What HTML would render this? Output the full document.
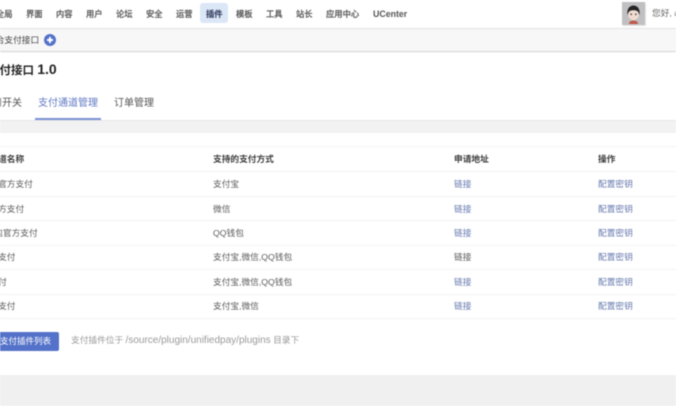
<!DOCTYPE html>
<html lang="zh-CN"><head><meta charset="utf-8"><title>支付接口</title>
<style>
html,body{margin:0;padding:0;width:676px;height:406px;overflow:hidden;background:#fff}
body{position:relative;font-family:"Liberation Sans","Noto Sans CJK SC",sans-serif;color:#555}
#w{position:absolute;left:0;top:0;width:676px;height:406px;overflow:hidden;filter:blur(.4px)}
#w div{position:absolute;white-space:nowrap}
.n{top:8px;font-size:8.3px;line-height:12px;color:#555;font-weight:500;-webkit-text-stroke:.15px #555}
.c{font-size:8.7px;line-height:12px;color:#5a5a5a}
.c b{font-weight:400;font-size:9.4px}
.h{font-weight:700;color:#3c3c3c}
.l{color:#6578ae}
.r{left:0;width:676px;height:1px;background:#f3f3f3}
</style></head><body><div id="w">
<div style="left:0;top:0;width:676px;height:28px;background:#fff"></div>
<div style="left:200px;top:3px;width:28px;height:20px;background:#dbe6f7;border-radius:3px"></div>
<div class="n" style="left:-4px">全局</div>
<div class="n" style="left:26px">界面</div>
<div class="n" style="left:56px">内容</div>
<div class="n" style="left:86px">用户</div>
<div class="n" style="left:116px">论坛</div>
<div class="n" style="left:146px">安全</div>
<div class="n" style="left:176px">运营</div>
<div class="n" style="left:206px;color:#33446e;font-weight:700">插件</div>
<div class="n" style="left:236px">模板</div>
<div class="n" style="left:266px">工具</div>
<div class="n" style="left:296px">站长</div>
<div class="n" style="left:326px">应用中心</div>
<div class="n" style="left:373px;font-size:8.8px;font-weight:700;-webkit-text-stroke:0">UCenter</div>
<div style="left:622px;top:2px;width:23px;height:23px;background:#c0c0c3;box-shadow:1px 1px 1px #e4e4e4;overflow:hidden">
<svg width="23" height="23" viewBox="0 0 23 23" style="display:block"><path d="M7 22c0-2.500 2-3.500 4.500-3.500S16 19.500 16 22z" fill="#c0584c"/><ellipse cx="11.500" cy="12" rx="5.500" ry="6.200" fill="#f0dcd0"/><path d="M5.500 13C4.500 6.500 8 3.500 11.500 3.500S18.500 6.500 17.500 13L16.500 10.500c-1-1.800-2.800-2.200-5-2.200s-4 .4-5 2.200z" fill="#252525"/><circle cx="9.200" cy="12.300" r=".8" fill="#333"/><circle cx="13.800" cy="12.300" r=".8" fill="#333"/></svg></div>
<div style="left:652px;top:7px;font-size:8.7px;line-height:13px;color:#666">您好, admin</div>
<div style="left:0;top:28px;width:676px;height:1px;background:#e2e2e2"></div>

<div style="left:0;top:29px;width:676px;height:22px;background:#f7f7f7;box-shadow:0 1px 1px #d0d0d0"></div>
<div style="left:-13px;top:34px;font-size:8.7px;line-height:12px;color:#444">聚合支付接口</div>
<div style="left:44px;top:34px;width:12px;height:12px;border-radius:50%;background:#5472c9"></div>
<div style="left:47px;top:39.300px;width:6px;height:1.500px;background:#fff"></div>
<div style="left:49.250px;top:37px;width:1.500px;height:6px;background:#fff"></div>

<div style="left:-12px;top:61px;font-size:11.5px;line-height:17px;font-weight:700;color:#222">支付接口 <span style="font-size:14px">1.0</span></div>
<div style="left:-18px;top:97px;font-size:10px;line-height:14px;color:#555">启用开关</div>
<div style="left:38px;top:97px;font-size:10px;line-height:14px;color:#5f78c4">支付通道管理</div>
<div style="left:114px;top:97px;font-size:10px;line-height:14px;color:#555">订单管理</div>
<div style="left:35px;top:118px;width:66px;height:2px;background:#7a90d2"></div>
<div style="left:0;top:120px;width:676px;height:1px;background:#e6e6e6"></div>
<div style="left:0;top:121px;width:676px;height:12px;background:#f2f2f2"></div>

<div class="r" style="top:146px"></div>
<div class="r" style="top:171px"></div>
<div class="r" style="top:196px"></div>
<div class="r" style="top:220px"></div>
<div class="r" style="top:245px"></div>
<div class="r" style="top:269px"></div>
<div class="r" style="top:294px"></div>
<div class="r" style="top:318px"></div>

<div class="c h" style="left:-28px;top:153px">支付通道名称</div>
<div class="c h" style="left:213px;top:153px">支持的支付方式</div>
<div class="c h" style="left:454px;top:153px">申请地址</div>
<div class="c h" style="left:598px;top:153px">操作</div>

<div class="c" style="left:-28px;top:178px">支付宝官方支付</div>
<div class="c" style="left:213px;top:178px">支付宝</div>
<div class="c l" style="left:454px;top:178px">链接</div>
<div class="c l" style="left:598px;top:178px">配置密钥</div>

<div class="c" style="left:-28px;top:203px">微信官方支付</div>
<div class="c" style="left:213px;top:203px">微信</div>
<div class="c l" style="left:454px;top:203px">链接</div>
<div class="c l" style="left:598px;top:203px">配置密钥</div>

<div class="c" style="left:-28px;top:227px">QQ钱包官方支付</div>
<div class="c" style="left:213px;top:227px">QQ钱包</div>
<div class="c l" style="left:454px;top:227px">链接</div>
<div class="c l" style="left:598px;top:227px">配置密钥</div>

<div class="c" style="left:-28px;top:251px">虎皮椒支付</div>
<div class="c" style="left:213px;top:251px">支付宝,微信,QQ钱包</div>
<div class="c" style="left:454px;top:251px">链接</div>
<div class="c l" style="left:598px;top:251px">配置密钥</div>

<div class="c" style="left:-28px;top:276px">聚合支付</div>
<div class="c" style="left:213px;top:276px">支付宝,微信,QQ钱包</div>
<div class="c l" style="left:454px;top:276px">链接</div>
<div class="c l" style="left:598px;top:276px">配置密钥</div>

<div class="c" style="left:-28px;top:300px">易收款支付</div>
<div class="c" style="left:213px;top:300px">支付宝,微信</div>
<div class="c l" style="left:454px;top:300px">链接</div>
<div class="c l" style="left:598px;top:300px">配置密钥</div>

<div style="left:-10px;top:332px;width:69px;height:19px;background:#5472c9;border-radius:2px"></div>
<div style="left:0;top:335px;font-size:8.5px;line-height:13px;color:#fff;font-weight:400">支付插件列表</div>
<div style="left:71px;top:334px;font-size:8.7px;line-height:13px;color:#999">支付插件位于 <span style="font-size:10px">/source/plugin/unifiedpay/plugins</span> 目录下</div>

<div style="left:0;top:375px;width:676px;height:31px;background:#f0f0f0"></div>
</div></body></html>
